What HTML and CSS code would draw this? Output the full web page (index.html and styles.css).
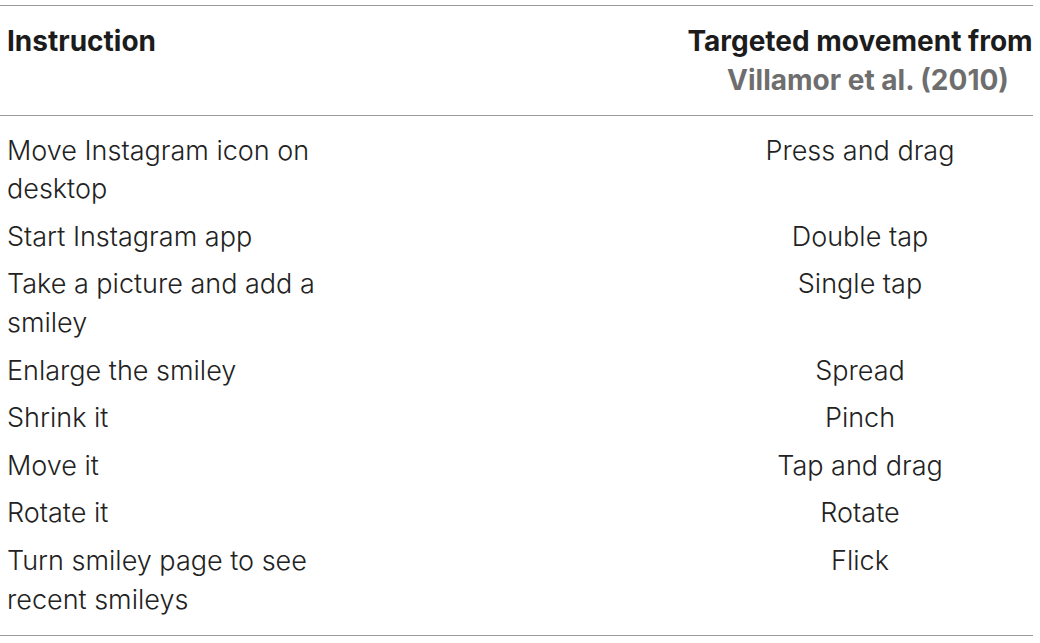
FILE: index.html
```html
<!DOCTYPE html>
<html lang="en">
<head>
<meta charset="utf-8">
<title>Instructions and targeted movements</title>
<link rel="stylesheet" href="styles.css">
</head>
<body>
<table class="movements">
  <thead>
    <tr>
      <th class="col-instr">Instruction</th>
      <th class="col-gap"></th>
      <th class="col-move">Targeted movement from<br><span class="cite">Villamor et al. (2010)</span></th>
    </tr>
  </thead>
  <tbody>
    <tr><td class="col-instr">Move Instagram icon on desktop</td><td class="col-gap"></td><td class="col-move">Press and drag</td></tr>
    <tr><td class="col-instr">Start Instagram app</td><td class="col-gap"></td><td class="col-move">Double tap</td></tr>
    <tr><td class="col-instr">Take a picture and add a smiley</td><td class="col-gap"></td><td class="col-move">Single tap</td></tr>
    <tr><td class="col-instr">Enlarge the smiley</td><td class="col-gap"></td><td class="col-move">Spread</td></tr>
    <tr><td class="col-instr">Shrink it</td><td class="col-gap"></td><td class="col-move">Pinch</td></tr>
    <tr><td class="col-instr">Move it</td><td class="col-gap"></td><td class="col-move">Tap and drag</td></tr>
    <tr><td class="col-instr">Rotate it</td><td class="col-gap"></td><td class="col-move">Rotate</td></tr>
    <tr><td class="col-instr">Turn smiley page to see recent smileys</td><td class="col-gap"></td><td class="col-move">Flick</td></tr>
  </tbody>
</table>
</body>
</html>
```
FILE: styles.css
```css
html, body {
  margin: 0;
  padding: 0;
  background: #ffffff;
}
body {
  padding-top: 5px;
  font-family: Inter, "Liberation Sans", Arial, sans-serif;
  color: #222222;
}
.movements {
  width: 1033px;
  border-collapse: collapse;
  table-layout: fixed;
  border-top: 1px solid #9a9a9a;
  border-bottom: 1px solid #9a9a9a;
}
.movements th,
.movements td {
  padding: 0;
  vertical-align: top;
  line-height: 38.6px;
}
.movements th {
  font-size: 28px;
  font-weight: 700;
  color: #1c1c1c;
  padding-top: 16px;
  padding-bottom: 16px;
  border-bottom: 1px solid #9a9a9a;
}
.movements td {
  font-size: 27px;
  font-weight: 300;
  padding-top: 4.5px;
  padding-bottom: 4.5px;
}
.movements tbody tr:first-child td {
  padding-top: 15.5px;
}
.movements tbody tr:last-child td {
  padding-bottom: 16px;
}
.col-instr {
  width: 345px;
  text-align: left;
  padding-left: 7px !important;
}
.col-gap {
  width: auto;
}
.col-move {
  width: 346px;
  text-align: center;
}
.cite {
  display: inline-block;
  color: #6e6e6e;
  padding-left: 16px;
}
```
